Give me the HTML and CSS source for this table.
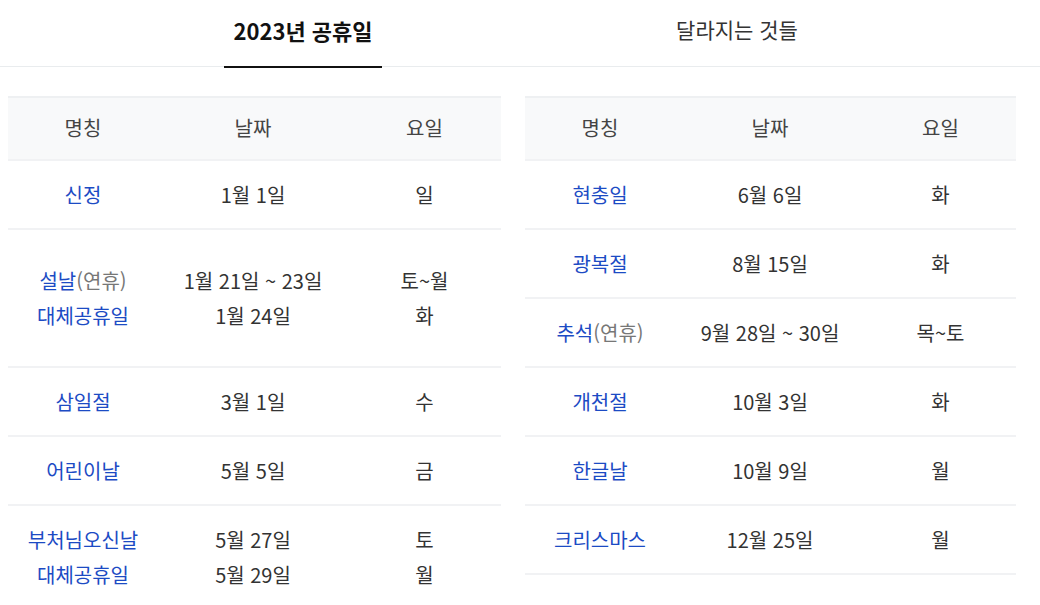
FILE: index.html
```html
<!DOCTYPE html>
<html lang="ko">
<head>
<meta charset="utf-8">
<title>2023년 공휴일</title>
<link rel="stylesheet" href="styles.css">
</head>
<body>
<nav class="tabs">
  <div class="tab active"><span class="tab-label">2023년 공휴일</span></div>
  <div class="tab"><span class="tab-label">달라지는 것들</span></div>
</nav>
<main class="tables">
  <section class="table">
    <div class="row head"><div>명칭</div><div>날짜</div><div>요일</div></div>
    <div class="row"><div class="name">신정</div><div>1월 1일</div><div>일</div></div>
    <div class="row tall"><div class="name">설날<span class="note">(연휴)</span><br>대체공휴일</div><div>1월 21일 ~ 23일<br>1월 24일</div><div>토~월<br>화</div></div>
    <div class="row"><div class="name">삼일절</div><div>3월 1일</div><div>수</div></div>
    <div class="row"><div class="name">어린이날</div><div>5월 5일</div><div>금</div></div>
    <div class="row"><div class="name">부처님오신날<br>대체공휴일</div><div>5월 27일<br>5월 29일</div><div>토<br>월</div></div>
  </section>
  <section class="table">
    <div class="row head"><div>명칭</div><div>날짜</div><div>요일</div></div>
    <div class="row"><div class="name">현충일</div><div>6월 6일</div><div>화</div></div>
    <div class="row"><div class="name">광복절</div><div>8월 15일</div><div>화</div></div>
    <div class="row"><div class="name">추석<span class="note">(연휴)</span></div><div>9월 28일 ~ 30일</div><div>목~토</div></div>
    <div class="row"><div class="name">개천절</div><div>10월 3일</div><div>화</div></div>
    <div class="row"><div class="name">한글날</div><div>10월 9일</div><div>월</div></div>
    <div class="row"><div class="name">크리스마스</div><div>12월 25일</div><div>월</div></div>
  </section>
</main>
</body>
</html>
```
FILE: styles.css
```css
html, body {
  margin: 0;
  padding: 0;
  background: #fff;
}
body {
  font-family: "Noto Sans CJK KR", "Noto Sans", sans-serif;
  color: #333;
  overflow: hidden;
}
.tabs {
  display: grid;
  grid-template-columns: 434px 434px;
  justify-content: center;
  height: 66px;
  border-bottom: 1px solid #e9ecee;
}
.tab {
  display: flex;
  justify-content: center;
  align-items: stretch;
}
.tab-label {
  display: flex;
  align-items: center;
  padding: 0 9px 8px;
  font-size: 21px;
  color: #333;
}
.tab.active .tab-label {
  font-size: 22px;
  font-weight: 700;
  color: #111;
  border-bottom: 2px solid #111;
  margin-bottom: -2px;
  padding-bottom: 7px;
}
.tables {
  display: grid;
  grid-template-columns: 493px 491px;
  column-gap: 24px;
  padding: 29px 0 0 8px;
}
.table {
  display: flex;
  flex-direction: column;
}
.row {
  display: grid;
  grid-template-columns: 150px 190px 1fr;
  border-bottom: 2px solid #f1f2f4;
  font-size: 20px;
  line-height: 35px;
  padding: 16px 0;
  text-align: center;
}
.row.head {
  background: #f8f9fa;
  border-top: 2px solid #eef0f2;
  padding: 12px 0 13px;
  line-height: 36px;
  color: #444;
}
.row.tall {
  padding: 33px 0;
}
.name {
  color: #1c4bc4;
}
.note {
  color: #777;
}
```
